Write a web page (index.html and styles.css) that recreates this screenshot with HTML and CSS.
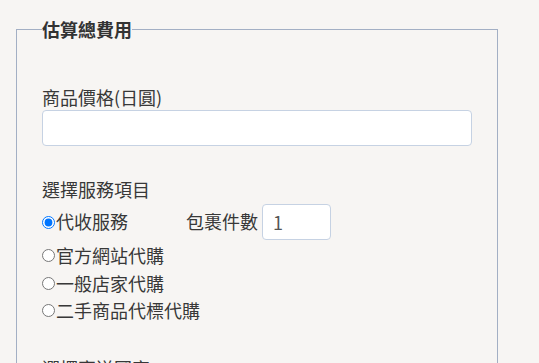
FILE: index.html
```html
<!DOCTYPE html>
<html lang="zh-Hant">
<head>
    <meta charset="UTF-8">
    <title>估算總費用</title>
    <link rel="stylesheet" href="styles.css">
</head>
<body>
    <fieldset class="estimate">
        <legend>估算總費用</legend>

        <!-- 商品價格 -->
        <div class="field">
            <label class="field-title" for="price">商品價格(日圓)</label>
            <input type="text" id="price" class="text-input">
        </div>

        <!-- 服務項目 -->
        <div class="field">
            <div class="field-title">選擇服務項目</div>
            <div class="options">
                <div class="option option-main">
                    <label><input type="radio" name="service" checked>代收服務</label>
                    <span class="qty-label">包裹件數</span>
                    <input type="text" class="qty-input" value="1">
                </div>
                <div class="option">
                    <label><input type="radio" name="service">官方網站代購</label>
                </div>
                <div class="option">
                    <label><input type="radio" name="service">一般店家代購</label>
                </div>
                <div class="option">
                    <label><input type="radio" name="service">二手商品代標代購</label>
                </div>
            </div>
        </div>

        <!-- 寄送國家 -->
        <div class="field">
            <div class="field-title">選擇寄送國家</div>
        </div>
    </fieldset>
</body>
</html>
```

FILE: styles.css
```css
/* General */
body {
    font-family: "Noto Sans CJK TC", "Noto Sans", sans-serif;
    font-size: 18px;
    background-color: #f7f5f3;
    color: #383838;
    margin: 0;
    padding: 16px;
}

/* Fieldset box */
.estimate {
    box-sizing: border-box;
    width: 482px;
    margin: 0;
    padding: 12px 25px 20px;
    border: 1px solid #a3afc4;
}

.estimate legend {
    padding: 0;
    font-weight: bold;
    color: #333;
}

.field {
    margin-top: 30px;
}

.field-title {
    display: block;
    line-height: 26px;
}

/* Inputs */
.text-input {
    display: block;
    box-sizing: border-box;
    width: 100%;
    height: 36px;
    margin: 0;
    border: 1px solid #c6d2e3;
    border-radius: 4px;
    background: #fff;
    font: inherit;
}

.qty-input {
    box-sizing: border-box;
    width: 69px;
    height: 36px;
    margin: 0 0 0 4px;
    padding: 0 10px;
    border: 1px solid #c6d2e3;
    border-radius: 4px;
    background: #fff;
    font: inherit;
    color: #555;
}

/* Radio options */
.option {
    display: flex;
    align-items: center;
    line-height: 27.5px;
}

.option-main {
    height: 40px;
}

.option label {
    display: flex;
    align-items: center;
}

.option input[type="radio"] {
    width: 13px;
    height: 13px;
    margin: 0 1px 0 0;
}

.qty-label {
    margin-left: 58px;
}
```
